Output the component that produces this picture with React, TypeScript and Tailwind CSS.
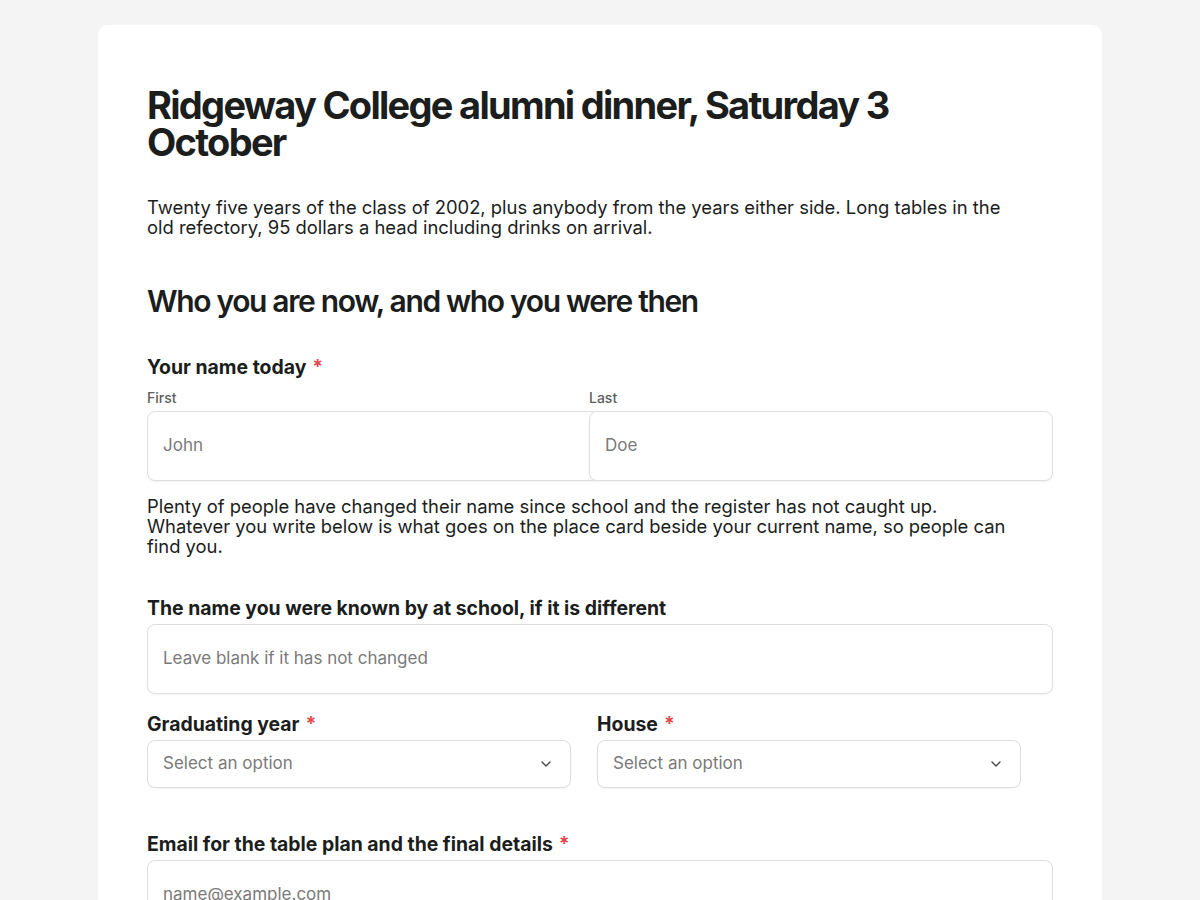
import { ChevronDown } from 'lucide-react';

const body = { fontFamily: 'Inter, "Noto Sans", sans-serif' };

function Label({ text, required }: { text: string; required?: boolean }) {
  return (
    <div className="text-[19.4px] leading-6 font-bold text-[#1b1e1d]">
      {text}
      {required && <span className="text-[#e5484d] ml-1.5">*</span>}
    </div>
  );
}

function TextInput({ placeholder, className = '' }: { placeholder: string; className?: string }) {
  return (
    <div
      className={`h-[70px] flex items-center px-[15px] bg-white border border-[#dedede] rounded-lg shadow-[0_1px_2px_rgba(0,0,0,0.05)] text-[17px] text-[#7a7a7a] ${className}`}
    >
      {placeholder}
    </div>
  );
}

function Select() {
  return (
    <div className="w-[424px] h-[48px] flex items-center justify-between pl-[15px] pr-4 bg-white border border-[#dedede] rounded-lg shadow-[0_1px_2px_rgba(0,0,0,0.05)] text-[17px] text-[#7a7a7a]">
      <span>Select an option</span>
      <ChevronDown size={16} strokeWidth={2} className="text-[#444]" />
    </div>
  );
}

export default function App() {
  return (
    <div className="min-h-[900px] bg-[#f4f4f4] pt-[25px] px-[98px]" style={body}>
      <div className="bg-white rounded-[10px] pt-[62px] px-[49px] pb-20">
        <h1 className="text-[38px] leading-[37px] font-bold tracking-[-0.045em] text-[#1b1e1d] pr-[140px]">
          Ridgeway College alumni dinner, Saturday 3 October
        </h1>
        <p className="mt-[36px] text-[18.4px] leading-5 text-[#1b1e1d] pr-[40px]">
          Twenty five years of the class of 2002, plus anybody from the years either side. Long tables in the old refectory, 95 dollars a head including drinks on arrival.
        </p>
        <h2 className="mt-[46px] text-[30px] leading-9 font-semibold tracking-[-0.045em] text-[#1b1e1d]">
          Who you are now, and who you were then
        </h2>

        <div className="mt-[36px]">
          <Label text="Your name today" required />
          <div className="mt-[10px] flex">
            <div className="w-[442px]">
              <div className="text-[14px] leading-[18px] font-medium text-[#5b5e5d]">First</div>
              <TextInput placeholder="John" className="mt-1 w-[452px]" />
            </div>
            <div className="flex-1 relative">
              <div className="text-[14px] leading-[18px] font-medium text-[#5b5e5d]">Last</div>
              <TextInput placeholder="Doe" className="mt-1 relative" />
            </div>
          </div>
          <p className="mt-[15px] text-[18.4px] leading-5 text-[#1b1e1d] pr-[40px]">
            Plenty of people have changed their name since school and the register has not caught up. Whatever you write below is what goes on the place card beside your current name, so people can find you.
          </p>
        </div>

        <div className="mt-[40px]">
          <Label text="The name you were known by at school, if it is different" />
          <TextInput placeholder="Leave blank if it has not changed" className="mt-1" />
        </div>

        <div className="mt-[18px] flex gap-[26px]">
          <div>
            <Label text="Graduating year" required />
            <div className="mt-1">
              <Select />
            </div>
          </div>
          <div>
            <Label text="House" required />
            <div className="mt-1">
              <Select />
            </div>
          </div>
        </div>

        <div className="mt-[44px]">
          <Label text="Email for the table plan and the final details" required />
          <TextInput placeholder="name@example.com" className="mt-1" />
        </div>
      </div>
    </div>
  );
}
